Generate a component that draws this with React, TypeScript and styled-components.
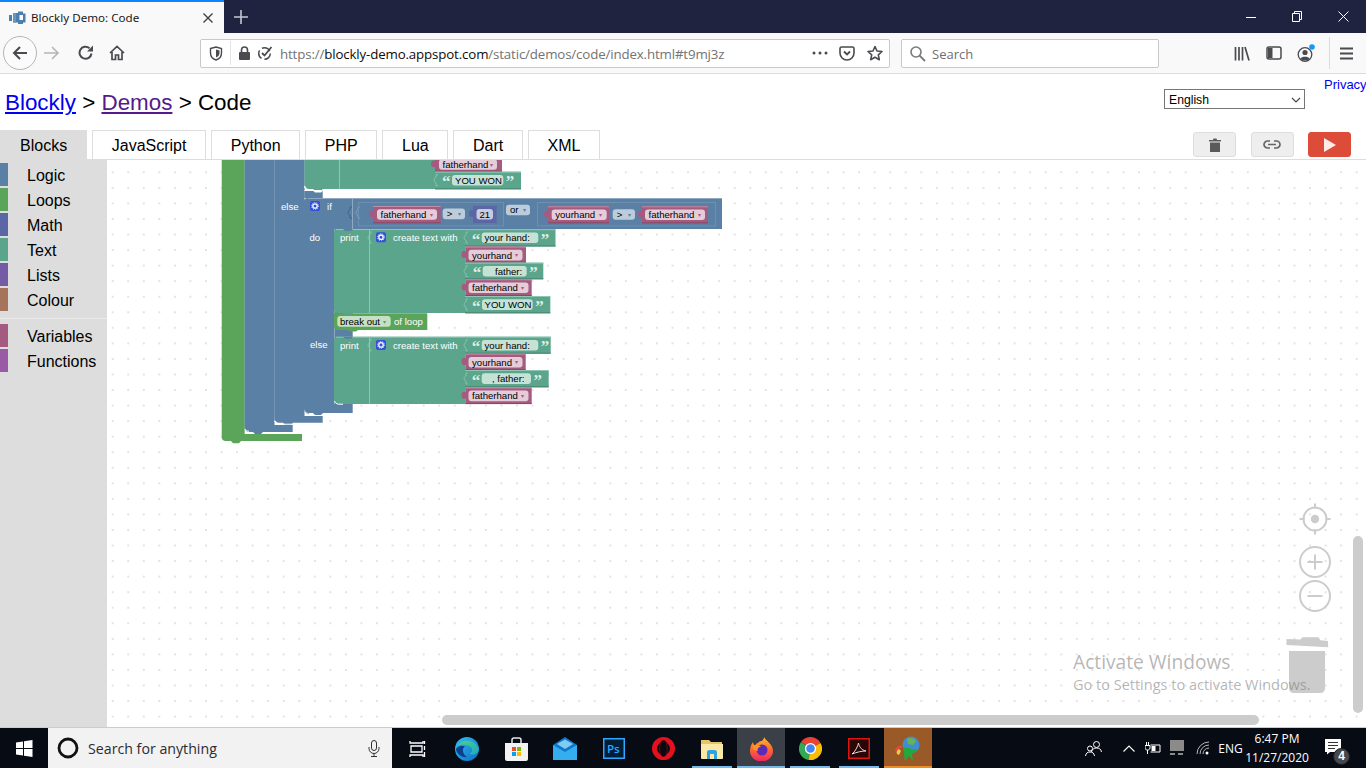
import React from "react";
import styled, { createGlobalStyle } from "styled-components";

const Global = createGlobalStyle`
  html, body { margin: 0; padding: 0; overflow: hidden; background: #fff; }
  body { font-family: "Liberation Sans", Arial, sans-serif; }
`;
const Page = styled.div`width:1366px;height:768px;display:flex;flex-direction:column;overflow:hidden;`;

/* ---------- browser chrome ---------- */
const TitleBar = styled.div`height:33px;background:#20233f;display:flex;align-items:stretch;flex:none;`;
const BrowserTab = styled.div`
  width:224px;box-sizing:border-box;background:#f9f9fa;border-top:2px solid #0a84ff;
  display:flex;align-items:center;padding:0 10px 0 9px;gap:5px;
`;
const TabTitle = styled.span`font:400 11.6px "Noto Sans",sans-serif;color:#18181a;flex:1;white-space:nowrap;`;
const NewTab = styled.div`width:34px;display:flex;align-items:center;justify-content:center;`;
const WinControls = styled.div`margin-left:auto;display:flex;align-items:center;`;
const WinBtn = styled.div`width:46px;height:33px;display:flex;align-items:center;justify-content:center;`;
const NavBar = styled.div`
  height:41px;box-sizing:border-box;background:#f9f9fa;border-bottom:1px solid #dcdcde;flex:none;
  display:flex;align-items:center;padding:0 0 0 3px;
`;
const BackCircle = styled.div`
  width:34px;height:34px;box-sizing:border-box;border:1px solid #b5b5b7;border-radius:50%;background:#fbfbfb;
  display:flex;align-items:center;justify-content:center;
`;
const NavIcon = styled.div<{ $w: number }>`width:${p => p.$w}px;height:24px;display:flex;align-items:center;justify-content:center;flex:none;`;
const UrlBar = styled.div`
  margin-left:71px;width:690px;height:29px;box-sizing:border-box;background:#fff;border:1px solid #c9c9cb;border-radius:2px;
  display:flex;align-items:center;
`;
const UrlSep = styled.div`width:1px;height:24px;background:#e4e4e6;margin:0 2px 0 0;`;
const UrlText = styled.div`font:400 13.3px "Open Sans",sans-serif;color:#737373;white-space:nowrap;margin-left:5px;padding-top:1px;flex:1;letter-spacing:-.145px;b{font-weight:400;color:#0c0c0d;}`;
const SearchBar = styled.div`
  margin-left:11px;width:258px;height:29px;box-sizing:border-box;background:#fff;border:1px solid #c9c9cb;border-radius:2px;
  display:flex;align-items:center;padding-left:7px;gap:6px;
  font:400 13px "Open Sans",sans-serif;color:#6f6f72;
`;
const SearchWord = styled.span`padding-top:1px;`;
const ToolSep = styled.div`width:1px;height:32px;background:#dcdcde;margin:0 6px 0 7px;`;

/* ---------- page ---------- */
const PageHead = styled.div`height:56px;flex:none;display:flex;align-items:flex-start;padding-left:5px;`;
const Heading = styled.h1`
  margin:16px 0 0;font-size:22.4px;font-weight:400;line-height:26px;color:#000;
  a{color:#00e;text-decoration:underline;}
  a.seen{color:#551a8b;}
`;
const LangSelect = styled.div`
  margin:15px 0 0 auto;width:141px;height:20px;box-sizing:border-box;border:1px solid #767676;background:#fff;
  display:flex;align-items:center;justify-content:space-between;padding:1px 3px 0 4px;font-size:12.2px;color:#000;
`;
const Privacy = styled.a`margin:3px 0 0 19px;font-size:13px;line-height:16px;color:#00e;width:42px;white-space:nowrap;`;
const TabRow = styled.div`height:30px;flex:none;display:flex;`;
const DemoTab = styled.div<{ $on?: boolean }>`
  box-sizing:border-box;height:30px;padding:0 18.65px;margin-right:5px;border:1px solid #ddd;border-bottom:none;
  background:${p => (p.$on ? "#ddd" : "#fff")};font-size:16px;line-height:30px;color:#000;white-space:nowrap;
  ${p => (p.$on ? "border-left:none;padding:0 19px 0 20px;" : "")}
`;
const Actions = styled.div`margin-left:auto;display:flex;gap:14.5px;padding:2px 15px 0 0;`;
const ActionBtn = styled.div<{ $red?: boolean }>`
  width:43px;height:25px;box-sizing:border-box;border-radius:3px;display:flex;align-items:center;justify-content:center;
  background:${p => (p.$red ? "#dd4b39" : "#eee")};border:1px solid ${p => (p.$red ? "#dd4b39" : "#ddd")};
`;
const Main = styled.div`flex:1;display:flex;min-height:0;border-top:1px solid #ddd;margin-top:-1px;border-bottom:1px solid #ccc;`;
const Toolbox = styled.div`width:107px;flex:none;background:#ddd;padding-top:3px;box-sizing:border-box;`;
const ToolRow = styled.div`height:23px;margin-bottom:2px;display:flex;align-items:center;font-size:16px;color:#000;`;
const ToolColor = styled.span<{ $c: string }>`width:8px;height:23px;background:${p => p.$c};margin-right:19px;`;
const ToolLabel = styled.span`margin-top:2px;`;
const ToolSeparator = styled.div`margin:7px 0 5px;border-bottom:1px solid #e9e9e9;`;
const Workspace = styled.div`flex:1;position:relative;background:#fff;overflow:hidden;`;
const Canvas = styled.svg`position:absolute;inset:0;display:block;`;
const HScroll = styled.div`position:absolute;left:335px;top:555px;width:817px;height:10px;border-radius:5px;background:#ccc;`;
const VScroll = styled.div`position:absolute;left:1246px;top:376px;width:10px;height:177px;border-radius:5px;background:#ccc;`;
const Activate = styled.div`
  position:absolute;left:966px;top:489px;font-family:"Open Sans",sans-serif;color:rgba(120,120,120,.55);white-space:nowrap;pointer-events:none;
`;
const ActivateTitle = styled.div`font-size:19.2px;line-height:26px;`;
const ActivateSub = styled.div`font-size:14.5px;line-height:19px;`;

/* ---------- taskbar ---------- */
const Taskbar = styled.div`height:40px;flex:none;background:#070b14;display:flex;align-items:stretch;color:#fff;`;
const StartBtn = styled.div`width:48px;display:flex;align-items:center;justify-content:center;`;
const TaskSearch = styled.div`
  width:344px;background:#f2f2f2;display:flex;align-items:center;padding:0 12px 0 9px;box-sizing:border-box;
  font:400 14.2px "Open Sans",sans-serif;color:#2b2b33;
`;
const TaskSearchText = styled.span`margin-left:9px;flex:1;`;
const TaskView = styled.div`width:51px;display:flex;align-items:center;justify-content:center;padding-top:1px;`;
const TaskItem = styled.div<{ $bg?: string; $line?: string }>`
  width:48px;margin-right:1px;box-sizing:border-box;display:flex;align-items:center;justify-content:center;position:relative;
  background:${p => p.$bg || "transparent"};
  padding-top:1px;
  &::after{
    content:"";position:absolute;bottom:0;height:2px;
    left:${p => (p.$bg ? 0 : 4)}px;right:${p => (p.$bg ? 0 : 4)}px;
    background:${p => p.$line || "transparent"};
  }
`;
const Tray = styled.div`margin-left:auto;width:291px;display:flex;align-items:center;`;
const TrayCell = styled.div<{ $ml: number; $w: number }>`
  margin-left:${p => p.$ml}px;width:${p => p.$w}px;flex:none;display:flex;align-items:center;justify-content:center;position:relative;
`;
const Lang = styled.span`font:400 12px "Open Sans",sans-serif;color:#fff;`;
const Clock = styled.div`font:400 12px/19px "Open Sans",sans-serif;color:#fff;text-align:center;white-space:nowrap;`;
const NotifBadge = styled.span`
  position:absolute;left:8px;top:10px;width:17px;height:17px;border-radius:50%;background:#45484e;border:1px solid #1a1a1a;box-sizing:border-box;
  font:700 12px/15px "Liberation Sans",sans-serif;color:#fff;text-align:center;
`;

/* ---------- block text styles (svg) ---------- */
const Lab = styled.text`font:400 9.6px "Liberation Sans",sans-serif;fill:#fff;`;
const Fld = styled.text`font:400 9.6px "Liberation Sans",sans-serif;fill:#000;`;
const Quote = styled.text`font:700 17px "Liberation Serif",serif;fill:#dcefe7;`;
const Arrow = styled.text`font:400 6px "Liberation Sans",sans-serif;`;

const PINK = "#a55b80", GREEN = "#5ba58c", LOOP = "#5ba55b", BLUE = "#5b80a5", MATH = "#5b67a5";

const Gear = ({ x, y }: { x: number; y: number }) => (
  <g>
    <rect x={x} y={y} width={10} height={10} rx={2} fill="#3350d8" />
    <circle cx={x + 5} cy={y + 5} r={2.2} fill="none" stroke="#fff" strokeWidth={1.3} />
    <circle cx={x + 5} cy={y + 5} r={3.5} fill="none" stroke="#fff" strokeWidth={.8} strokeDasharray="1 1.2" />
  </g>
);

const tabPath = (x: number, y: number, w: number, h: number) =>
  `M${x} ${y}H${x + w}V${y + h}H${x}V${y + 11}c-1.6 .8-4 .4-4-3.2s2.4-3.8 4-3V${y}Z`;

const VarBlock = ({ x, y, w, h, name, fw, fx }: { x: number; y: number; w: number; h: number; name: string; fx: number; fw: number }) => (
  <g>
    <path d={tabPath(x, y, w, h)} fill={PINK} />
    <path d={`M${x} ${y + .5}H${x + w}`} stroke="#c08ca6" />
    <path d={`M${x} ${y + h - .5}H${x + w}`} stroke="#844966" />
    <rect x={fx} y={y + 3.2} width={fw} height={10.6} rx={3} fill="#e4cdd9" />
    <Fld x={fx + 3.5} y={y + 11.9}>{name}</Fld>
    <Arrow x={fx + fw - 7.5} y={y + 10.6} fill="#a55b80">▾</Arrow>
  </g>
);

const Dropdown = ({ x, y, w, label }: { x: number; y: number; w: number; label: string }) => (
  <g>
    <rect x={x} y={y} width={w} height={10.6} rx={3} fill="#bdccdb" />
    <Fld x={x + 4} y={y + 8.6}>{label}</Fld>
    <Arrow x={x + w - 7.5} y={y + 7.6} fill="#5b80a5">▾</Arrow>
  </g>
);

const Socket = ({ x, y, c = "#8fc6b2" }: { x: number; y: number; c?: string }) => (
  <path d={`M${x + 3} ${y + 2}h-2v3c-2.4 0-2.6 5 0 5v3h2`} fill="none" stroke={c} strokeWidth={.8} />
);

const StringRow = ({ y, h, right, fx, fw, text, tx, left = 465 }: { y: number; h: number; right: number; fx: number; fw: number; text: string; tx: number; left?: number }) => (
  <g>
    <rect x={left} y={y} width={right - left} height={h} fill={GREEN} />
    <path d={`M${left} ${y + .5}H${right}`} stroke="#8fc6b2" />
    <path d={`M${left} ${y + h - .5}H${right}`} stroke="#488370" />
    <Socket x={left} y={y + 1} />
    <Quote x={fx - 10} y={y + 15.5}>“</Quote>
    <rect x={fx} y={y + 3.3} width={fw} height={10.6} rx={3} fill="#c5e2d6" />
    <Fld x={tx} y={y + 12}>{text}</Fld>
    <Quote x={fx + fw + 2.5} y={y + 15.5}>”</Quote>
  </g>
);

const Print = ({ y, h }: { y: number; h: number }) => (
  <g>
    <path d={`M337 ${y}H465V${y + h}H338c-2.4 0-4-1.6-4-4V${y + 3}c0-1.6 1.4-3 3-3Z`} fill={GREEN} />
    <path d={`M369.5 ${y}V${y + h}M465.5 ${y}V${y + h}`} stroke="#8fc6b2" />
    <path d={`M336 ${y + .5}H465`} stroke="#8fc6b2" />
    <Lab x={340} y={y + 12.3}>print</Lab>
    <Socket x={369} y={y + 1} />
    <Gear x={376} y={y + 3.2} />
    <Lab x={393} y={y + 12.3}>create text with</Lab>
  </g>
);

const Blocks = () => (
  <g>
    {/* outer repeat loop */}
    <path d="M221.7 160H244.3V434H302V441H241l-2 2.2h-6l-2-2.2h-5.3c-2.4 0-4-1.6-4-4Z" fill={LOOP} />
    <path d="M244.5 160V434" stroke="#8cc48c" />
    {/* nested loops/ifs */}
    <path d="M244.5 160H274.5V425H292.7V432H263l-2 2h-6l-2-2h-3.5c-2.8 0-5-2-5-5Z" fill={BLUE} />
    <path d="M274.5 160V423" stroke="#8fa9c3" />
    <path d="M249 431.3c-2-.2-3.6-1-4-2.5" stroke="#fff" fill="none" />
    <path d="M274.5 160H304.5V416H322.7V422.7H293l-2 2h-6l-2-2h-3.5c-2.8 0-5-2-5-5Z" fill={BLUE} />
    <path d="M304.5 160V198" stroke="#8fa9c3" />
    <path d="M278 423.6c-2-.2-3.2-1-3.7-2.5M279 424.2H292" stroke="#fff" fill="none" />

    {/* top print, cut by the scroll position */}
    <path d="M304.5 160H435V189H323l-2 1.8h-6l-2-1.8h-4c-2.6 0-4.5-1.6-4.5-4Z" fill={GREEN} />
    <path d="M339.5 160V189M435.5 160V172" stroke="#8fc6b2" />
    <path d="M304.5 186c.6 2.4 2 4.2 4.5 4.6H313M321 190.6H304.5" stroke="#fff" fill="none" strokeWidth={1.2} />
    <rect x={304.5} y={191} width={18.2} height={7} fill={BLUE} />
    <path d="M309 190.8H313l2 1.8h6l2-1.8" fill="#fff" />
    <VarBlock x={435} y={156} w={67} h={15.7} name="fatherhand" fx={439} fw={58} />
    <StringRow left={435} y={171.7} h={17.6} right={521} fx={452} fw={51.3} text="YOU WON" tx={455} />

    {/* if / else-if */}
    <path d="M308 198H722V229H352.7V413H323l-2 2h-6l-2-2h-4c-2.8 0-5-1.8-5-4.5V201c0-1.8 1.6-3 3.5-3Z" fill={BLUE} />
    <path d="M308 198.5H722" stroke="#8fa9c3" />
    <path d="M304.5 410c.6 2 2 3.3 4.5 3.8M334.5 229V404" stroke="#8fa9c3" fill="none" />
    <path d="M352.5 199V229" stroke="#8fa9c3" />
    <Lab x={281} y={210.3}>else</Lab>
    <Gear x={310} y={201} />
    <Lab x={327} y={210}>if</Lab>
    <Socket x={349} y={205} c="#3f5c79" />
    <Socket x={357} y={205} c="#8fa9c3" />
    <rect x={358.5} y={202.5} width={145} height={23.4} fill="none" stroke="#6f8fae" />
    <rect x={537.5} y={202.5} width={178} height={23.4} fill="none" stroke="#6f8fae" />
    <VarBlock x={373} y={206} w={67.7} h={17.3} name="fatherhand" fx={377} fw={60} />
    <Dropdown x={442.7} y={208.6} w={22.3} label=">" />
    <path d={tabPath(473, 205.7, 23.7, 17.6)} fill={MATH} />
    <rect x={476.5} y={209} width={16.5} height={10.6} rx={3} fill="#c8cce2" />
    <Fld x={479.5} y={218}>21</Fld>
    <Dropdown x={506} y={204.7} w={24} label="or" />
    <VarBlock x={548} y={206.3} w={61} h={17} name="yourhand" fx={551.7} fw={55} />
    <Dropdown x={612.7} y={209.2} w={22.3} label=">" />
    <VarBlock x={642} y={206.3} w={66} h={17} name="fatherhand" fx={645} fw={60} />
    <Lab x={309.5} y={240.5}>do</Lab>

    {/* do branch */}
    <Print y={229} h={84} />
    <path d="M343 229l2 2h6l2-2Z" fill={BLUE} />
    <StringRow y={229.2} h={17.3} right={555.5} fx={481.7} fw={56.6} text="your hand:" tx={484.5} />
    <VarBlock x={465.5} y={246.6} w={60.5} h={16} name="yourhand" fx={468.5} fw={54} />
    <StringRow y={262.7} h={16.6} right={543.3} fx={482.7} fw={44} text="father:" tx={495} />
    <VarBlock x={465.5} y={279.3} w={66.2} h={16.7} name="fatherhand" fx={468.5} fw={60} />
    <StringRow y={296} h={17.3} right={550.3} fx={482} fw={50.7} text="YOU WON" tx={484.5} />

    {/* break */}
    <path d="M334 313.3H427.3V330H358l-2 1.6h-6l-2-1.6h-10c-2.4 0-4-1.4-4-4Z" fill={LOOP} />
    <path d="M343 313.3l2 1.8h6l2-1.8Z" fill={GREEN} />
    <rect x={337.3} y={316} width={53.4} height={10.7} rx={3} fill="#c5e0c5" />
    <Fld x={340} y={325}>break out</Fld>
    <Arrow x={383} y={323.5} fill="#5ba55b">▾</Arrow>
    <Lab x={394} y={325}>of loop</Lab>
    <Lab x={310} y={348}>else</Lab>

    {/* else branch */}
    <Print y={336.7} h={67.4} />
    <path d="M343 336.7l2 2h6l2-2Z" fill={BLUE} />
    <path d="M334.5 401c.5 1.8 2 3 4 3.2H343" stroke="#fff" fill="none" />
    <StringRow y={336.7} h={17} right={550.7} fx={481.7} fw={56.6} text="your hand:" tx={484.5} />
    <VarBlock x={465.5} y={353.7} w={60.2} h={16.4} name="yourhand" fx={468.5} fw={54} />
    <StringRow y={370} h={17.3} right={548.7} fx={481.7} fw={49.3} text=",   father:" tx={492} />
    <VarBlock x={465.5} y={387.4} w={66.2} h={16.7} name="fatherhand" fx={468.5} fw={60} />
  </g>
);

const Controls = () => (
  <g fill="none" stroke="#ccc" strokeWidth={2}>
    <circle cx={1315} cy={519} r={11.5} />
    <path d="M1315 503.5v5M1315 529.5v5M1299.5 519h5M1325.5 519h5" />
    <circle cx={1315} cy={519} r={4.2} fill="#ccc" stroke="none" />
    <circle cx={1315} cy={562} r={15} />
    <path d="M1307.5 562h15M1315 554.5v15" />
    <circle cx={1315} cy={596} r={15} />
    <path d="M1307.5 596h15" />
    <path d="M1286.5 639l14 .4 2-2.2 16 0 2 3 7.5 .8.2 6.2-41.7-2.2Z" fill="#ccc" stroke="none" />
    <path d="M1289 651H1325V688.5c0 2.6-2 4.5-4.5 4.5H1293.5c-2.5 0-4.5-2-4.5-4.5Z" fill="#ccc" stroke="none" />
  </g>
);

/* ---------- icons ---------- */
const G = "#4a4a4f";
const Ico = ({ w = 16, h = 16, vb, children }: { w?: number; h?: number; vb?: string; children: React.ReactNode }) => (
  <svg width={w} height={h} viewBox={vb || `0 0 ${w} ${h}`} fill="none" style={{ display: "block" }}>{children}</svg>
);

const WindowsLogo = () => (
  <Ico w={17} h={17}>
    <path d="M0 2.4L7 1.4V8H0ZM8 1.3L16.5 0V8H8ZM0 9H7V15.6L0 14.6ZM8 9H16.5V17L8 15.7Z" fill="#fff" />
  </Ico>
);

const App = () => {
  const tools: [string, string][] = [["Logic", BLUE], ["Loops", LOOP], ["Math", MATH], ["Text", GREEN], ["Lists", "#745ba5"], ["Colour", "#a5745b"]];
  const tools2: [string, string][] = [["Variables", PINK], ["Functions", "#995ba5"]];
  const tabs = ["JavaScript", "Python", "PHP", "Lua", "Dart", "XML"];
  return (
    <Page>
      <Global />
      <TitleBar>
        <BrowserTab>
          <Ico w={17} h={16}>
            <path d="M0 5H3V11H0ZM4 3H9V1.5H14V3.5H16.5V12.5H14V14H9V12.5H4Z" fill="#4a7fae" />
            <path d="M10.5 5H14V10H10.5Z" fill="#f9f9fa" />
            <path d="M4 3H7V12.5H4Z" fill="#6d94b8" />
          </Ico>
          <TabTitle>Blockly Demo: Code</TabTitle>
          <Ico w={12} h={12}><path d="M1.5 1.5L10.5 10.5M10.5 1.5L1.5 10.5" stroke="#3f3f44" strokeWidth={1.4} /></Ico>
        </BrowserTab>
        <NewTab>
          <Ico w={14} h={14}><path d="M7 0V14M0 7H14" stroke="#c8c9d2" strokeWidth={1.6} /></Ico>
        </NewTab>
        <WinControls>
          <WinBtn><Ico w={10} h={10}><path d="M0 5.5H10" stroke="#fff" /></Ico></WinBtn>
          <WinBtn><Ico w={10} h={11}><path d="M.5 2.5H7.5V10.5H.5ZM2.5 2.5V.5H9.5V8.5H7.5" stroke="#fff" /></Ico></WinBtn>
          <WinBtn><Ico w={11} h={11}><path d="M.5 .5L10.5 10.5M10.5 .5L.5 10.5" stroke="#fff" /></Ico></WinBtn>
        </WinControls>
      </TitleBar>
      <NavBar>
        <BackCircle>
          <Ico w={16} h={16}><path d="M15 8H2M8 2L2 8L8 14" stroke={G} strokeWidth={2} /></Ico>
        </BackCircle>
        <NavIcon $w={30}><Ico w={16} h={16}><path d="M0 8H14M8 2L14 8L8 14" stroke="#b5b5b8" strokeWidth={1.6} /></Ico></NavIcon>
        <NavIcon $w={38}><Ico w={16} h={16}><path d="M13.5 8.5A6 6 0 1 1 11.5 3.2" stroke={G} strokeWidth={2} /><path d="M15 .5V6.5H9Z" fill={G} /></Ico></NavIcon>
        <NavIcon $w={24}><Ico w={16} h={16}><path d="M1 8L8 1.5L15 8M3 7V14.5H6.5V10H9.5V14.5H13V7" stroke={G} strokeWidth={1.7} /></Ico></NavIcon>
        <UrlBar>
          <NavIcon $w={29}><Ico w={14} h={15}><path d="M1.5 2.5L7 1L12.5 2.5V7C12.5 10.5 10 13 7 14C4 13 1.5 10.5 1.5 7Z" stroke={G} strokeWidth={1.4} /><path d="M7 3.5L10.5 4.5V7C10.5 9 9 10.8 7 11.5Z" fill={G} /></Ico></NavIcon>
          <UrlSep />
          <NavIcon $w={22}><Ico w={13} h={14}><rect x={1} y={6} width={11} height={8} rx={1} fill={G} /><path d="M3.5 6V4a3 3 0 0 1 6 0V6" stroke={G} strokeWidth={1.6} /></Ico></NavIcon>
          <NavIcon $w={20}><Ico w={16} h={16}><circle cx={7.5} cy={8.5} r={5.8} stroke={G} strokeWidth={1.5} strokeDasharray="9 3" /><path d="M5 8L7.5 10.5L14.5 2" stroke={G} strokeWidth={1.8} /></Ico></NavIcon>
          <UrlText>https://<b>blockly-demo.appspot.com</b>/static/demos/code/index.html#t9mj3z</UrlText>
          <NavIcon $w={26}><Ico w={16} h={4}><circle cx={2} cy={2} r={1.5} fill={G} /><circle cx={8} cy={2} r={1.5} fill={G} /><circle cx={14} cy={2} r={1.5} fill={G} /></Ico></NavIcon>
          <NavIcon $w={28}><Ico w={16} h={15}><path d="M1 2.5C1 1.5 1.7 1 2.5 1H13.5C14.3 1 15 1.5 15 2.5V7A7 7 0 0 1 1 7Z" stroke={G} strokeWidth={1.6} /><path d="M5 5.5L8 8.5L11 5.5" stroke={G} strokeWidth={1.8} /></Ico></NavIcon>
          <NavIcon $w={28}><Ico w={16} h={16}><path d="M8 1.5L10 6L15 6.5L11.3 9.8L12.3 14.7L8 12.2L3.7 14.7L4.7 9.8L1 6.5L6 6Z" stroke={G} strokeWidth={1.6} strokeLinejoin="round" /></Ico></NavIcon>
        </UrlBar>
        <SearchBar>
          <Ico w={17} h={17}><circle cx={7} cy={7} r={5} stroke="#7a7a7d" strokeWidth={1.6} /><path d="M10.5 10.5L16 16" stroke="#7a7a7d" strokeWidth={1.8} /></Ico>
          <SearchWord>Search</SearchWord>
        </SearchBar>
        <NavIcon $w={67} />
        <NavIcon $w={32}><Ico w={16} h={15}><path d="M1.5 1V14.5M5 1V14.5M8.5 1V14.5M11 1L15 14.5" stroke={G} strokeWidth={1.7} /></Ico></NavIcon>
        <NavIcon $w={32}><Ico w={16} h={14}><rect x={1} y={1} width={14} height={12} rx={2} stroke={G} strokeWidth={1.5} /><path d="M2 2H6.5V12H2Z" fill={G} /></Ico></NavIcon>
        <NavIcon $w={32}>
          <Ico w={18} h={19}>
            <circle cx={8} cy={10.5} r={6.8} stroke={G} strokeWidth={1.3} />
            <circle cx={8} cy={8.5} r={2.6} fill={G} />
            <path d="M3.5 14.5C4.5 12 11.5 12 12.5 14.5C11 17 5 17 3.5 14.5Z" fill={G} />
            <circle cx={15} cy={3} r={2.8} fill="#0a9dff" />
          </Ico>
        </NavIcon>
        <ToolSep />
        <NavIcon $w={20}><Ico w={13} h={13}><path d="M0 1.5H13M0 6.5H13M0 11.5H13" stroke={G} strokeWidth={1.8} /></Ico></NavIcon>
      </NavBar>

      <PageHead>
        <Heading><a href="#b">Blockly</a> &gt; <a className="seen" href="#d">Demos</a> &gt; Code</Heading>
        <LangSelect>
          English
          <Ico w={10} h={6}><path d="M1 1L5 5L9 1" stroke="#444" strokeWidth={1.1} /></Ico>
        </LangSelect>
        <Privacy>Privacy</Privacy>
      </PageHead>
      <TabRow>
        <DemoTab $on>Blocks</DemoTab>
        {tabs.map(t => <DemoTab key={t}>{t}</DemoTab>)}
        <Actions>
          <ActionBtn>
            <Ico w={12} h={14}><path d="M0 2H4L4.5 .5H7.5L8 2H12V3.5H0ZM1 4.5H11V14H1Z" fill="#5a5a5a" /></Ico>
          </ActionBtn>
          <ActionBtn>
            <Ico w={18} h={9}><path d="M7 1H4.5a3.5 3.5 0 0 0 0 7H7M11 1H13.5a3.5 3.5 0 0 1 0 7H11M5 4.5H13" stroke="#666" strokeWidth={1.7} /></Ico>
          </ActionBtn>
          <ActionBtn $red>
            <Ico w={12} h={14}><path d="M0 0L12 7L0 14Z" fill="#fff" fillOpacity={.9} /></Ico>
          </ActionBtn>
        </Actions>
      </TabRow>
      <Main>
        <Toolbox>
          {tools.map(([n, c]) => <ToolRow key={n}><ToolColor $c={c} /><ToolLabel>{n}</ToolLabel></ToolRow>)}
          <ToolSeparator />
          {tools2.map(([n, c]) => <ToolRow key={n}><ToolColor $c={c} /><ToolLabel>{n}</ToolLabel></ToolRow>)}
        </Toolbox>
        <Workspace>
          <Canvas width={1259} height={567} viewBox="107 160 1259 567">
            <defs>
              <pattern id="dots" x={104.9} y={164.55} width={15.55} height={15.55} patternUnits="userSpaceOnUse">
                <circle cx={7.8} cy={7.8} r={.9} fill="#d6d6d6" />
              </pattern>
            </defs>
            <rect x={107} y={160} width={1259} height={567} fill="url(#dots)" />
            <Blocks />
            <Controls />
          </Canvas>
          <HScroll />
          <VScroll />
          <Activate>
            <ActivateTitle>Activate Windows</ActivateTitle>
            <ActivateSub>Go to Settings to activate Windows.</ActivateSub>
          </Activate>
        </Workspace>
      </Main>

      <Taskbar>
        <StartBtn><WindowsLogo /></StartBtn>
        <TaskSearch>
          <Ico w={22} h={22}><circle cx={11} cy={11} r={9} stroke="#111" strokeWidth={2.8} /></Ico>
          <TaskSearchText>Search for anything</TaskSearchText>
          <Ico w={12} h={17}><rect x={3.5} y={.5} width={5} height={10} rx={2.5} stroke="#333" /><path d="M1 7V8.5A5 5 0 0 0 11 8.5V7M6 13.5V16.5M3 16.5H9" stroke="#333" /></Ico>
        </TaskSearch>
        <TaskView><Ico w={17} h={16}><path d="M1 0V2H14V0M1 16V14H14V16M2 5H13V11H2ZM15.5 0V3M15.5 5V9M15.5 11V16" stroke="#fff" strokeWidth={1.3} /></Ico></TaskView>
        <TaskItem>
          <Ico w={24} h={24}>
            <defs>
              <linearGradient id="edgeA" x1="0" y1="0" x2="1" y2="1"><stop offset="0" stopColor="#35c1f1" /><stop offset="1" stopColor="#0a6cc4" /></linearGradient>
              <linearGradient id="edgeB" x1="0" y1="0" x2="1" y2="1"><stop offset="0" stopColor="#52d17c" /><stop offset="1" stopColor="#1aa8c9" /></linearGradient>
            </defs>
            <circle cx={12} cy={12} r={12} fill="url(#edgeA)" />
            <path d="M3 9C6 2 20 1 23.8 12C24 17 17 19 14 16.5C17 16 18 13 16.5 11C14 8 7 6 3 9Z" fill="url(#edgeB)" />
            <path d="M10 9.5C7 11 7 17 12 20C7 21 1.5 17 1 12C3 9 7 8 10 9.5Z" fill="#0b3f8f" />
          </Ico>
        </TaskItem>
        <TaskItem>
          <Ico w={23} h={24}>
            <path d="M7 6V3C7 1.5 8 1 9 1H14C15 1 16 1.5 16 3V6" stroke="#e8e8e8" strokeWidth={1.5} />
            <path d="M0 6H23V22C23 23 22 24 21 24H2C1 24 0 23 0 22Z" fill="#f3f3f3" />
            <rect x={7} y={10} width={4} height={4} fill="#f25022" /><rect x={12} y={10} width={4} height={4} fill="#7fba00" />
            <rect x={7} y={15} width={4} height={4} fill="#00a4ef" /><rect x={12} y={15} width={4} height={4} fill="#ffb900" />
          </Ico>
        </TaskItem>
        <TaskItem>
          <Ico w={24} h={23}>
            <path d="M12 0L24 8V23H0V8Z" fill="#0f78c9" />
            <path d="M0 8L12 15L24 8V23H0Z" fill="#35aef0" />
            <path d="M4 7L12 2.5L20 7L12 12Z" fill="#7fcdf5" />
          </Ico>
        </TaskItem>
        <TaskItem>
          <svg width={22} height={21} viewBox="0 0 22 21" style={{ display: "block" }}>
            <rect x={.75} y={.75} width={20.5} height={19.5} fill="#001e36" stroke="#31a8ff" strokeWidth={1.5} />
            <text x={4} y={15} fontFamily="Open Sans" fontWeight={600} fontSize={11.5} fill="#31a8ff">Ps</text>
          </svg>
        </TaskItem>
        <TaskItem>
          <Ico w={23} h={23}>
            <circle cx={11.5} cy={11.5} r={9} stroke="#e3101e" strokeWidth={5} />
            <ellipse cx={11.5} cy={11.5} rx={4.5} ry={8.5} fill="#5d0710" />
            <ellipse cx={11.5} cy={11.5} rx={3.2} ry={8} fill="#070b14" />
          </Ico>
        </TaskItem>
        <TaskItem $line="#76b9ed">
          <Ico w={22} h={20}>
            <path d="M0 1H8L10 3H21V19H0Z" fill="#e8c468" />
            <path d="M0 5H22V19C22 19.5 21.5 20 21 20H1C.5 20 0 19.5 0 19Z" fill="#fbe9a9" />
            <path d="M6 20V13C6 12 7 11 8 11H14C15 11 16 12 16 13V20H13V15H9V20Z" fill="#2ea3e0" />
          </Ico>
        </TaskItem>
        <TaskItem $bg="#3b3f47" $line="#76b9ed">
          <Ico w={23} h={24}>
            <defs>
              <linearGradient id="ff" x1="0" y1="0" x2="0" y2="1"><stop offset="0" stopColor="#ffbd2e" /><stop offset=".5" stopColor="#ff6a2e" /><stop offset="1" stopColor="#f0246b" /></linearGradient>
            </defs>
            <path d="M14 0C16 4 23 7 23 14A11.5 10.5 0 0 1 0 14C0 10 1.5 7 3 5C3 7 4 8 5 8.5C6 6 9 6 10 4C11 5 14 3 14 0Z" fill="url(#ff)" />
            <circle cx={12} cy={13} r={5.5} fill="#5a2bb5" />
            <path d="M3 9C6 7 10 8 11 10C8 10 7 12 8 14L4 13Z" fill="#ff9426" />
          </Ico>
        </TaskItem>
        <TaskItem $line="#76b9ed">
          <Ico w={23} h={23}>
            <path d="M11.5 11.5L21.5 6A11.5 11.5 0 0 0 2 5Z" fill="#ea4335" />
            <path d="M11.5 11.5L2 5A11.5 11.5 0 0 0 9.5 23Z" fill="#34a853" />
            <path d="M11.5 11.5L9.5 23A11.5 11.5 0 0 0 21.5 6Z" fill="#fbbc05" />
            <circle cx={11.5} cy={11.5} r={5.6} fill="#fff" />
            <circle cx={11.5} cy={11.5} r={4.3} fill="#4285f4" />
          </Ico>
        </TaskItem>
        <TaskItem $line="#76b9ed">
          <Ico w={22} h={21}>
            <rect x={.75} y={.75} width={20.5} height={19.5} fill="#2a0606" stroke="#e0150f" strokeWidth={1.5} />
            <path d="M4 16C7 14 10 8 10.5 5C11 8 13 12 18 13C14 13 9 14 4 16Z" stroke="#e8d8d8" strokeWidth={1} />
          </Ico>
        </TaskItem>
        <TaskItem $bg="#9a5a28" $line="#f08a24">
          <Ico w={28} h={26}>
            <circle cx={17} cy={9} r={8.5} fill="#3f8fd0" />
            <path d="M13 3C16 1 20 2 22 5L19 9L14 8Z" fill="#67b35a" />
            <path d="M1 15C1 11 5 9 9 10L7 12C5 12 4 14 5 16Z" fill="#e04c3c" />
            <path d="M3 18C2 16 3 14 5 13L7 15L5 19Z" fill="#f1c93b" />
            <path d="M9 11L24 14L18 18L19 25L15 20L11 25Z" fill="#23a83c" />
          </Ico>
        </TaskItem>
        <Tray>
          <TrayCell $ml={9} $w={18}>
            <Ico w={17} h={17}><circle cx={11.5} cy={4.5} r={3} stroke="#fff" /><path d="M6.5 12C7 9 9 8 11.5 8S16 9 16.5 12" stroke="#fff" /><circle cx={5} cy={8.5} r={2.5} stroke="#fff" /><path d="M.5 16C1 13 2.5 12 5 12S9 13 9.5 16" stroke="#fff" /></Ico>
          </TrayCell>
          <TrayCell $ml={20} $w={14}>
            <Ico w={12} h={7}><path d="M.5 6.5L6 1L11.5 6.5" stroke="#fff" strokeWidth={1.1} /></Ico>
          </TrayCell>
          <TrayCell $ml={8} $w={18}>
            <Ico w={16} h={12}><path d="M5.5 3H15V10H5.5" stroke="#fff" /><rect x={6.5} y={4} width={4} height={5} fill="#fff" /><path d="M0 3.5H5V6C5 8 2.5 8 2.5 8S0 8 0 6ZM1.5 0V3.5M3.5 0V3.5M2.5 8V12" stroke="#fff" /></Ico>
          </TrayCell>
          <TrayCell $ml={8} $w={14}>
            <Ico w={14} h={16}><rect x={0} y={0} width={14} height={11} fill="#8b8b8b" /><rect x={0} y={13} width={5} height={2} fill="#8b8b8b" /><rect x={8} y={13} width={5} height={2} fill="#8b8b8b" /></Ico>
          </TrayCell>
          <TrayCell $ml={12} $w={14}>
            <Ico w={14} h={14}><path d="M1 13A12 12 0 0 1 13 1M4 13A9 9 0 0 1 13 4M7 13A6 6 0 0 1 13 7" stroke="#b8b8b8" /><circle cx={11} cy={12} r={1.5} fill="#fff" /></Ico>
          </TrayCell>
          <TrayCell $ml={9} $w={23}><Lang>ENG</Lang></TrayCell>
          <TrayCell $ml={4} $w={62}><Clock>6:47 PM<br />11/27/2020</Clock></TrayCell>
          <TrayCell $ml={17} $w={24}>
            <Ico w={24} h={20}><path d="M0 1H16V14H5L2 16.5V14H0Z" fill="#fff" /><path d="M3 4.5H13M3 7.5H13M3 10.5H10" stroke="#333" /></Ico>
            <NotifBadge>4</NotifBadge>
          </TrayCell>
        </Tray>
      </Taskbar>
    </Page>
  );
};

export default App;
